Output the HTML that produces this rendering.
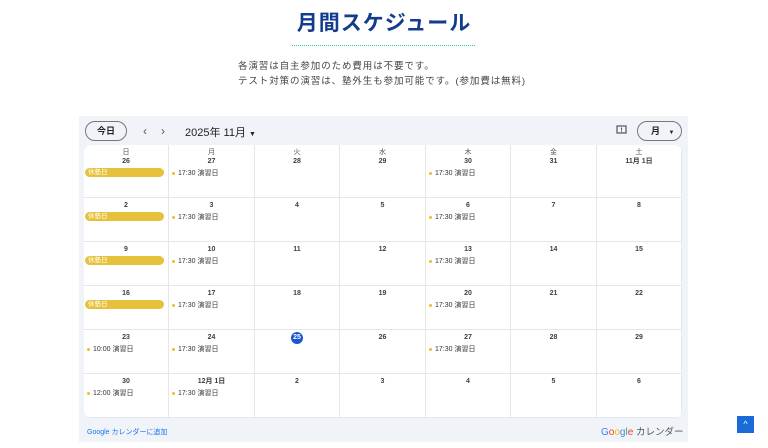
<!DOCTYPE html>
<html><head><meta charset="utf-8"><style>
*{margin:0;padding:0;box-sizing:border-box}
body{width:768px;height:448px;overflow:hidden;background:#fff;font-family:"Liberation Sans","Noto Sans CJK JP",sans-serif;position:relative;color:#3c4043}
.title{position:absolute;top:7px;left:0;width:768px;text-align:center;font-size:21px;font-weight:bold;color:#143c8c;letter-spacing:1px}
.line{position:absolute;top:45px;left:292px;width:183px;height:1px;background:repeating-linear-gradient(90deg,#2cc8b0 0 1px,transparent 1px 2px)}
.desc{position:absolute;top:59px;left:238px;font-size:9.5px;line-height:15px;color:#444;letter-spacing:0.9px}
.cal{position:absolute;left:79px;top:116px;width:609px;height:326px;background:#f0f3f8}
.today{position:absolute;left:6px;top:5px;width:42px;height:20px;border:1px solid #777;border-radius:10px;font-size:9px;font-weight:bold;text-align:center;line-height:18px;color:#222}
.nav{position:absolute;top:8px;font-size:12px;color:#555}
.month{position:absolute;left:106px;top:8px;font-size:11px;color:#222}
.mbtn{position:absolute;left:558px;top:5px;width:45px;height:20px;border:1px solid #777;border-radius:10px;font-size:9px;font-weight:bold;line-height:18px;padding-left:13px;color:#222}
.grid{position:absolute;left:5px;top:29px;width:598px;height:273px;background:#fff;border-radius:8px;overflow:hidden}
.cell{position:absolute;border-right:1px solid #e3e6ea;border-bottom:1px solid #e3e6ea;font-size:7px;text-align:center}
.dn{color:#555;margin-top:4px;line-height:8px}
.d{font-weight:bold;color:#3c4043;line-height:9px;font-size:7px;margin-top:3px}
.ev{text-align:left;padding-left:3px;margin-top:2px;font-size:7px;color:#333;white-space:nowrap}
.ev:before{content:"";display:inline-block;width:3px;height:3px;border-radius:50%;background:#e6c030;margin-right:3px;vertical-align:middle}
.hol{margin:2px 4px 0 1px;height:9px;background:#e6c23c;border-radius:5px;color:#fff;font-size:6.5px;text-align:left;padding-left:3px;line-height:9px}
.cur{display:inline-block;width:12px;height:12px;border-radius:50%;background:#1a57d0;color:#fff;line-height:12px;margin-top:-1px}
.foot{position:absolute;left:8px;top:311px;font-size:7px;color:#1a73e8}
.glogo{position:absolute;left:522px;top:308px;font-size:10px}
.top{position:absolute;left:737px;top:416px;width:17px;height:17px;background:#1a6ad8;color:#fff;font-size:9px;text-align:center;line-height:17px}
</style></head><body>
<div class="title">月間スケジュール</div>
<div class="line"></div>
<div class="desc">各演習は自主参加のため費用は不要です。<br>テスト対策の演習は、塾外生も参加可能です。(参加費は無料)</div>
<div class="cal">
<div class="today">今日</div>
<div class="nav" style="left:64px">‹</div><div class="nav" style="left:82px">›</div>
<div class="month">2025年 11月 <span style="font-size:7px">▼</span></div>
<svg style="position:absolute;left:537px;top:9px" width="11" height="10" viewBox="0 0 11 10"><rect x="1" y="1" width="9" height="7" fill="none" stroke="#555" stroke-width="1.2"/><path d="M5.5 2.5v3M5.5 6.3v.8" stroke="#555"/></svg>
<div class="mbtn">月 <span style="font-size:6px;margin-left:6px">▼</span></div>
<div class="grid" id="g"></div>
<div class="foot">Google カレンダーに追加</div>
<div class="glogo"><span style="color:#4285f4">G</span><span style="color:#ea4335">o</span><span style="color:#fbbc05">o</span><span style="color:#4285f4">g</span><span style="color:#34a853">l</span><span style="color:#ea4335">e</span> <span style="color:#555;font-size:9.5px">カレンダー</span></div>
</div>
<div class="top">^</div>
<script>
var days=["日","月","火","水","木","金","土"];
var dates=[["26","27","28","29","30","31","11月 1日"],["2","3","4","5","6","7","8"],["9","10","11","12","13","14","15"],["16","17","18","19","20","21","22"],["23","24","25","26","27","28","29"],["30","12月 1日","2","3","4","5","6"]];
var tops=[0,53,97,141,185,229,273];var h="";var w=598/7;
for(var r=0;r<6;r++)for(var c=0;c<7;c++){
var x=Math.round(c*w),x2=Math.round((c+1)*w);
h+='<div class="cell" style="left:'+x+'px;top:'+tops[r]+'px;width:'+(x2-x)+'px;height:'+(tops[r+1]-tops[r])+'px">';
if(r==0)h+='<div class="dn">'+days[c]+'</div><div class="d" style="margin-top:0">'+dates[r][c]+'</div>';
else if(r==4&&c==2)h+='<div class="d"><span class="cur">25</span></div>';
else h+='<div class="d">'+dates[r][c]+'</div>';
if(c==0&&r<4)h+='<div class="hol">休塾日</div>';
if(c==0&&r==4)h+='<div class="ev">10:00 演習日</div>';
if(c==0&&r==5)h+='<div class="ev">12:00 演習日</div>';
if(c==1||(c==4&&r<5))h+='<div class="ev">17:30 演習日</div>';
h+='</div>';}
document.getElementById("g").innerHTML=h;
</script>
</body></html>
